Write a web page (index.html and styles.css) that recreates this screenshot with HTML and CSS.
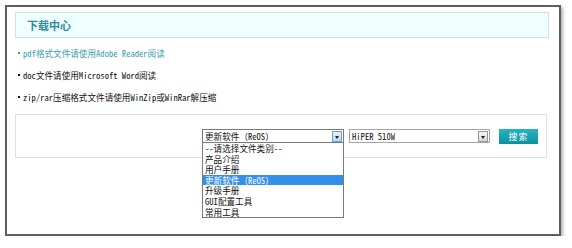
FILE: index.html
```html
<!DOCTYPE html>
<html lang="zh-CN">
<head>
  <meta charset="UTF-8">
  <title>下载中心</title>
  <link rel="stylesheet" href="styles.css">
</head>
<body>

  <div class="frame">
    <div class="head">下载中心</div>

    <ul class="tips">
      <li class="link">pdf格式文件请使用Adobe Reader阅读</li>
      <li>doc文件请使用Microsoft Word阅读</li>
      <li>zip/rar压缩格式文件请使用WinZip或WinRar解压缩</li>
    </ul>

    <div class="search">
      <div class="pick wide">
        <div class="sel open">
          <span class="val">更新软件（ReOS）</span>
          <span class="arrow hot"></span>
        </div>
        <ul class="list">
          <li>--请选择文件类别--</li>
          <li>产品介绍</li>
          <li>用户手册</li>
          <li class="on">更新软件（ReOS）</li>
          <li>升级手册</li>
          <li>GUI配置工具</li>
          <li>常用工具</li>
        </ul>
      </div>
      <div class="pick">
        <div class="sel">
          <span class="val">HiPER 510W</span>
          <span class="arrow"></span>
        </div>
      </div>
      <button class="go">搜索</button>
    </div>
  </div>

</body>
</html>
```

FILE: styles.css
```css
/* reset */
* { margin:0; padding:0; box-sizing:border-box }
body {
  background:#fff;
  font-family:"Noto Sans Mono CJK SC", "Noto Sans CJK SC", monospace;
  font-size:8.6px;
  color:#111;
}
ul { list-style:none }

/* outer window */
.frame {
  margin:5px 0 0 5px;
  width:556px; height:231px;
  border:2px solid #5e5e5e;
  box-shadow:2px 2px 3px #b4b4b4;
  padding:5px 10px 0 8px;
}

/* title bar */
.head {
  height:26px;
  background:#effefe;
  border:1px solid #d3e3e3;
  padding-left:11px;
  line-height:24px;
  font-size:11px; font-weight:bold;
  color:#2b8d98;
  font-family:"Noto Sans CJK SC", sans-serif;
}

/* notes */
.tips { padding:4px 0 0 3px }
.tips li {
  height:22px;
  display:flex; align-items:center;
}
.tips li::before {
  content:"";
  width:2px; height:2px;
  background:currentColor;
  margin-right:3px;
}
.tips .link { color:#3aa0ad }

/* search row */
.search {
  margin:6px 2px 0 0;
  height:44px;
  border:1px solid #dde2e2;
  display:flex; justify-content:flex-end; align-items:flex-start;
  padding:14px 8px 0 0;
  gap:5px;
}
.pick { position:relative; width:141px }
.pick.wide { width:142px }
.sel {
  height:14px;
  border:1px solid #a4a4a4;
  background:#fff;
  display:flex; align-items:center; justify-content:space-between;
  padding-left:2px;
  line-height:12px;
}
.sel.open { border-color:#7a7a7a }
.arrow {
  width:10px; height:11px; margin-right:1px;
  border:1px solid #9a9a9a;
  background:linear-gradient(#f6f6f6,#d8d8d8);
  position:relative;
}
.arrow::after {
  content:""; position:absolute; left:2px; top:4px;
  border:2px solid transparent; border-top:3px solid #222;
  border-bottom:0;
}
.arrow.hot {
  border-color:#6d9fcf;
  background:linear-gradient(#e4f1fd,#bcd9f6);
}

/* open dropdown */
.list {
  position:absolute; top:13px; left:0;
  width:100%;
  border:1px solid #7a7a7a;
  background:#fff;
  z-index:5;
}
.list li { height:10.6px; line-height:10.6px; padding-left:2px }
.list .on { background:#3390ea; color:#fff }

/* button */
.go {
  margin-left:4px;
  width:39px; height:15px;
  border:0;
  background:linear-gradient(#26b4c2,#0e8f9e);
  color:#fff;
  font-family:"Noto Sans CJK SC", sans-serif;
  font-size:9px;
  letter-spacing:1px;
}
```
